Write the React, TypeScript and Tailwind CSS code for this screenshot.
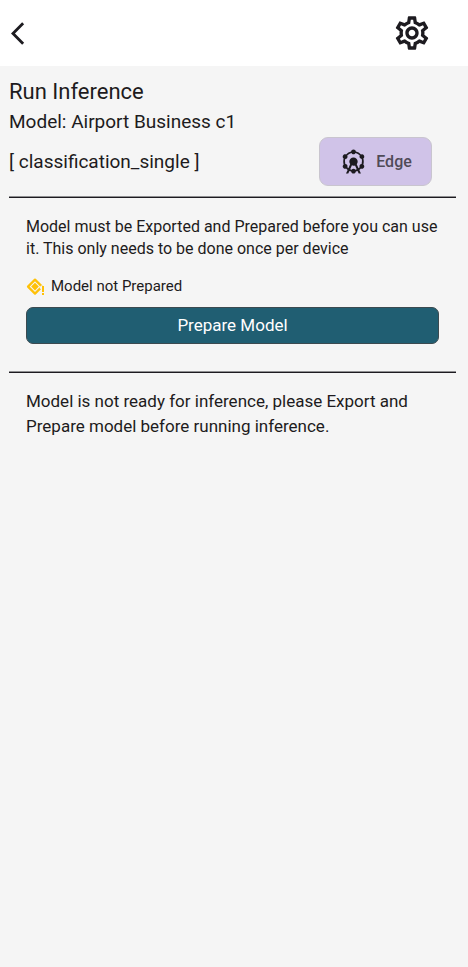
import { MdArrowBackIos, MdAttractions, MdOutlineSettings } from "react-icons/md";

function UnpreparedIcon() {
  return (
    <svg viewBox="0 0 18 18" className="size-[18px] shrink-0 text-[#ffc107]" aria-hidden="true">
      <path d="M9 1.6 16 8.6 9 15.6 2 8.6Z" fill="none" stroke="currentColor" strokeWidth="2.2" strokeLinejoin="round" />
      <path d="M9 4.8 12.8 8.6 9 12.4 5.2 8.6Z" fill="currentColor" />
      <path d="M15 7.4H18V18H15V11.4L13.4 9.8Z" fill="#f5f5f5" />
      <path d="M16 8h2v6h-2zM16 15h2v2h-2z" fill="currentColor" />
    </svg>
  );
}

function Divider() {
  return <hr className="h-0.5 border-0 border-t border-[#8f8f91] bg-[#1d1b20]" />;
}

export default function App() {
  return (
    <div className="min-h-screen bg-[#f5f5f5] font-['Roboto',sans-serif] text-[#1d1b20]">
      <header className="flex h-[66px] items-center justify-between bg-white pr-9 pl-[11px]">
        <button type="button" aria-label="Back">
          <MdArrowBackIos className="size-[27px]" />
        </button>
        <button type="button" aria-label="Settings">
          <MdOutlineSettings className="size-10" />
        </button>
      </header>

      <main className="pt-3 pr-3 pl-[9px]">
        <h1 className="text-[22px] leading-7">Run Inference</h1>
        <h2 className="text-[19px] leading-[31px]">Model: Airport Business c1</h2>
        <div className="mb-2.5 flex items-center justify-between pr-6">
          <p className="text-[19px] leading-6">[ classification_single ]</p>
          <button
            type="button"
            className="flex h-[49px] w-[113px] items-center justify-center gap-2 rounded-[9px] border border-[#c9c5cf] bg-[#d0c3e8] text-base font-medium text-[#504b58]"
          >
            <MdAttractions className="size-[29px] text-[#1d1b20]" />
            Edge
          </button>
        </div>
        <Divider />

        <section className="px-[17px] pt-[18px] pb-[27px]">
          <p className="text-base leading-[22px]">
            Model must be Exported and Prepared before you can use it. This only needs to be done once per device
          </p>
          <div className="mt-4 flex items-center gap-[7px] text-[15px] leading-[21px]">
            <UnpreparedIcon />
            <p>Model not Prepared</p>
          </div>
          <button
            type="button"
            className="mt-2.5 flex h-[37px] w-full items-center justify-center rounded-[7px] border border-[#3c4a50] bg-[#205e72] text-[17px] text-white"
          >
            Prepare Model
          </button>
        </section>
        <Divider />

        <p className="px-[17px] pt-4 text-[17px] leading-[25px]">
          Model is not ready for inference, please Export and Prepare model before running inference.
        </p>
      </main>
    </div>
  );
}
